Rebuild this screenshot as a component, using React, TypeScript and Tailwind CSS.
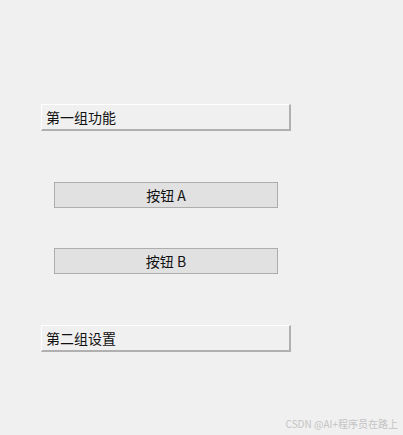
export default function App() {
  return (
    <div
      className="relative h-[435px] w-[403px] overflow-hidden bg-[#f0f0f0] pl-[41px] pt-[104px] text-[14px] text-[#111]"
      style={{ fontFamily: '"Noto Sans CJK SC", "Noto Sans", sans-serif' }}
    >
      {/* first group header */}
      <div className="flex h-[27px] w-[250px] items-center border-t border-l border-white border-b-2 border-r-2 border-b-[#b0b0b0] border-r-[#b0b0b0] pl-[4px] leading-none">
        第一组功能
      </div>

      <div className="mt-[51px] ml-[13px] flex flex-col gap-[40px]">
        <button className="flex h-[26px] w-[224px] items-center justify-center border border-[#adadad] bg-[#e1e1e1] leading-none">
          按钮 A
        </button>
        <button className="flex h-[26px] w-[224px] items-center justify-center border border-[#adadad] bg-[#e1e1e1] leading-none">
          按钮 B
        </button>
      </div>

      {/* second group header */}
      <div className="mt-[51px] flex h-[27px] w-[250px] items-center border-t border-l border-white border-b-2 border-r-2 border-b-[#b0b0b0] border-r-[#b0b0b0] pl-[4px] leading-none">
        第二组设置
      </div>

      <div className="absolute bottom-[6px] right-[5px] text-[10px] leading-none text-[#c4c4c4]">
        CSDN @AI+程序员在路上
      </div>
    </div>
  );
}
